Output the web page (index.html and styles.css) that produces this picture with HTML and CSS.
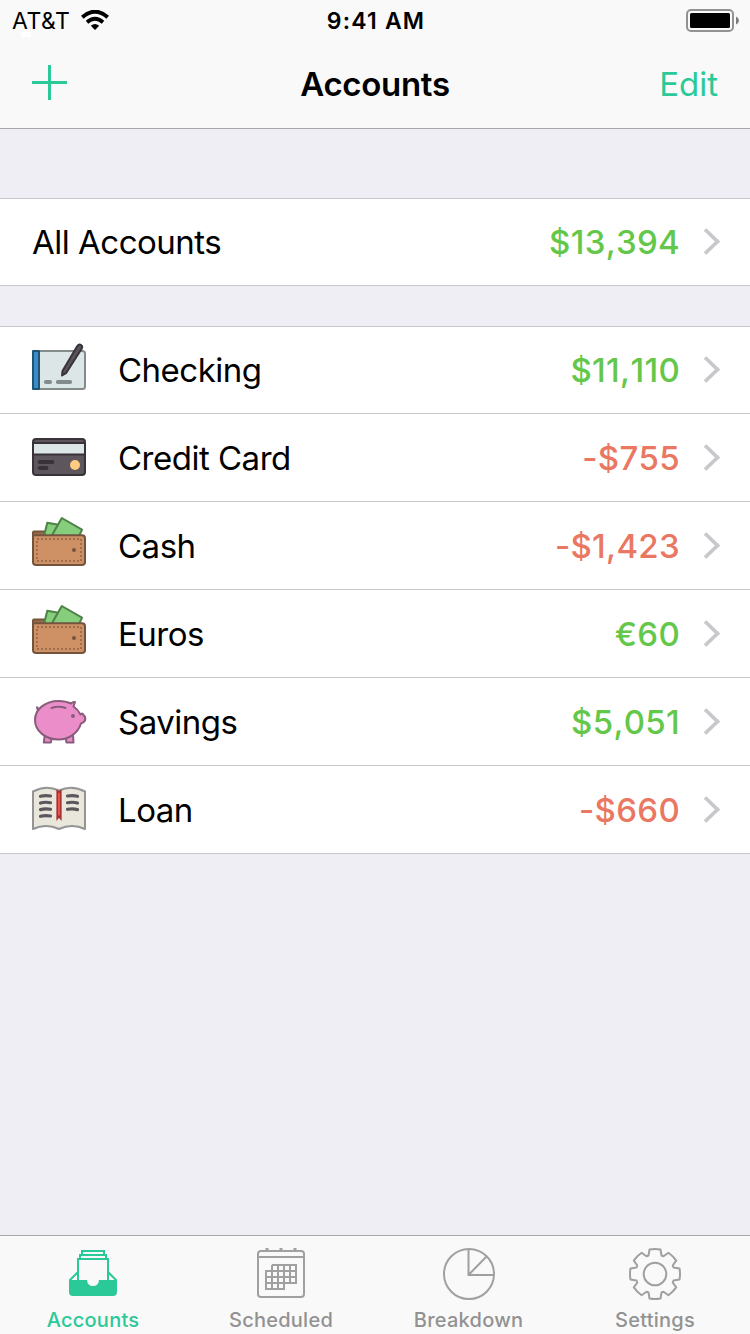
FILE: index.html
```html
<!DOCTYPE html>
<html lang="en">
<head>
    <meta charset="UTF-8">
    <title>Accounts</title>
    <link rel="stylesheet" href="styles.css">
</head>
<body>
    <!-- shared shapes -->
    <svg class="defs" width="0" height="0">
        <symbol id="chevron" viewBox="0 0 18 28">
            <path d="M2 1.5L14.5 13.5L2 25.5" fill="none" stroke="#c7c7cc" stroke-width="3.8"/>
        </symbol>
        <symbol id="wallet" viewBox="0 0 58 87">
            <path d="M3 34V30.5Q3 29.5 4 29.5H15V34Z" fill="#9c6b4a" stroke="#75543d" stroke-width="2"/>
            <path d="M14 34L17.3 20.7L30 23L28 34Z" fill="#86ce7c" stroke="#4f8149" stroke-width="2" stroke-linejoin="round"/>
            <path d="M21.5 34L31.8 16L52 27.7L49 34Z" fill="#86ce7c" stroke="#4f8149" stroke-width="2" stroke-linejoin="round"/>
            <path d="M3 33.3H52Q55 33.3 55 36.3V60Q55 63 52 63H6Q3 63 3 60Z" fill="#ce9166" stroke="#75543d" stroke-width="2"/>
            <path d="M7 37H51V59H7Z" fill="none" stroke="#a06e4c" stroke-width="1.9" stroke-dasharray="2 2"/>
            <circle cx="44" cy="48" r="2" fill="#75543d"/>
        </symbol>
    </svg>

    <div class="screen">
        <header class="header">
            <div class="status-bar">
                <div class="carrier">
                    <span>AT&amp;T</span>
                    <svg width="28" height="20" viewBox="0 0 28 20">
                        <path d="M1.3 7.2Q14-3.8 26.7 7.2" fill="none" stroke="#000" stroke-width="4"/>
                        <path d="M6 12.2Q14 5.4 22 12.2" fill="none" stroke="#000" stroke-width="3.8"/>
                        <path d="M9.8 15.8Q14 12.2 18.2 15.800L14 20Z"/>
                    </svg>
                </div>
                <div class="time">9:41 AM</div>
                <svg class="battery" width="54" height="24" viewBox="0 0 54 24">
                    <rect x="1" y="1" width="46" height="21" rx="4" fill="none" stroke="#929292" stroke-width="2"/>
                    <rect x="4" y="4" width="40" height="15" rx="1.5"/>
                    <path d="M50 7.5Q53 9 53 11.5T50 15.5Z" fill="#7c7c7c"/>
                </svg>
            </div>
            <nav class="nav-bar">
                <svg class="add" width="35" height="35" viewBox="0 0 35 35">
                    <path d="M16 0H19V16H35V19H19V35H16V19H0V16H16Z" fill="#2cc998"/>
                </svg>
                <h1>Accounts</h1>
                <a class="edit">Edit</a>
            </nav>
        </header>

        <main>
            <ul class="list total">
                <li>
                    <span class="name">All Accounts</span>
                    <span class="amount">$13,394</span>
                    <svg class="chevron"><use href="#chevron"/></svg>
                </li>
            </ul>

            <ul class="list">
                <li>
                    <svg class="icon" viewBox="0 0 58 87">
                        <rect x="3" y="24" width="52" height="38" rx="2.5" fill="#dde6e7" stroke="#848b8b" stroke-width="2"/>
                        <path d="M3 24H9V62H3Z" fill="#3b8cc6" stroke="#1f5475" stroke-width="2" stroke-linejoin="round"/>
                        <path d="M15.8 55H20.2M27.8 55H40.2" stroke="#848b8b" stroke-width="3.8" stroke-linecap="round"/>
                        <path d="M32 48.5L32.500 44L47 19.5Q49 16.500 51 18T51.8 21.5L36 46.200Z" fill="#5a545a" stroke="#383338" stroke-width="2" stroke-linejoin="round"/>
                    </svg>
                    <span class="name">Checking</span>
                    <span class="amount">$11,110</span>
                    <svg class="chevron"><use href="#chevron"/></svg>
                </li>
                <li>
                    <svg class="icon" viewBox="0 0 58 87">
                        <rect x="3" y="25" width="52" height="36" rx="3" fill="#5d575d"/>
                        <path d="M3 29H55V40.5H3Z" fill="#dde6e7" stroke="#383338" stroke-width="2"/>
                        <rect x="3" y="25" width="52" height="36" rx="3" fill="none" stroke="#383338" stroke-width="2"/>
                        <path d="M9.5 48H22.5M9.5 54H16.5" stroke="#383338" stroke-width="3.8" stroke-linecap="round"/>
                        <circle cx="45" cy="51" r="5" fill="#ffcc80"/>
                    </svg>
                    <span class="name">Credit Card</span>
                    <span class="amount negative">-$755</span>
                    <svg class="chevron"><use href="#chevron"/></svg>
                </li>
                <li>
                    <svg class="icon"><use href="#wallet"/></svg>
                    <span class="name">Cash</span>
                    <span class="amount negative">-$1,423</span>
                    <svg class="chevron"><use href="#chevron"/></svg>
                </li>
                <li>
                    <svg class="icon"><use href="#wallet"/></svg>
                    <span class="name">Euros</span>
                    <span class="amount">€60</span>
                    <svg class="chevron"><use href="#chevron"/></svg>
                </li>
                <li>
                    <svg class="icon" viewBox="0 0 58 87">
                        <g fill="#ea8dc9" stroke="#885c7b" stroke-width="2" stroke-linejoin="round">
                            <path d="M7.6 28.5Q6.5 31 9.8 34" fill="none" stroke-width="2.4"/>
                            <path d="M15 56L13.8 64.5H20.8L22 59ZM43 56L43.5 64.5H36.5L35.5 59Z"/>
                            <path d="M28.5 23C36 23 39 24.5 41 25.5Q43 23.5 45 24L43.5 28.5Q48 31.5 50.5 36.5Q53 34.5 53.5 37Q56 39 55 42.5Q54 44.5 51 45.5C48 55 39 61.5 28.5 61.5C15.5 61.5 5 53 5 42S15.5 23 28.5 23Z"/>
                            <path d="M21.5 30Q28.5 27.5 35.5 30" fill="none" stroke-linecap="round"/>
                        </g>
                        <circle cx="43" cy="38" r="2" fill="#885c7b"/>
                    </svg>
                    <span class="name">Savings</span>
                    <span class="amount">$5,051</span>
                    <svg class="chevron"><use href="#chevron"/></svg>
                </li>
                <li>
                    <svg class="icon" viewBox="0 0 58 87">
                        <path d="M3 25.5Q16 18.5 29 24.5Q42 18.5 55 25.5V63Q42 57 29 63Q16 57 3 63Z" fill="#e9e7dc" stroke="#949494" stroke-width="2" stroke-linejoin="round"/>
                        <path d="M10.500 30.3Q15 29 20.500 30M10.500 37Q15 35.700 20.500 36.700M10.500 43.600Q15 42.300 20.500 43.300M10.500 50.300Q15 49 20.500 50M37.500 30Q43 29 47.500 30.300M37.500 36.700Q43 35.700 47.500 37M37.500 43.300Q43 42.300 47.500 43.600" fill="none" stroke="#5d575d" stroke-width="3.2" stroke-linecap="round"/>
                        <path d="M27.3 25L29 26L30.7 25V52.5L29 50.5L27.3 52.5Z" fill="#ff5a5a" stroke="#a52e2e" stroke-width="1.8"/>
                    </svg>
                    <span class="name">Loan</span>
                    <span class="amount negative">-$660</span>
                    <svg class="chevron"><use href="#chevron"/></svg>
                </li>
            </ul>
        </main>

        <footer class="tab-bar">
            <a class="tab active">
                <svg width="56" height="56" viewBox="0 0 56 56">
                    <path d="M4.500 34.500L13 26M51.500 34.500L43 26M13 35V13H43V35M15 13V9H41V13M17 9V5H39V9" fill="none" stroke="#2cc998" stroke-width="2"/>
                    <path d="M4 34H22Q22.5 40 28 40T34 34H52V46Q52 50 48 50H8Q4 50 4 46Z" fill="#2cc998"/>
                </svg>
                <span>Accounts</span>
            </a>
            <a class="tab">
                <svg width="56" height="56" viewBox="0 0 56 56" fill="none" stroke="#a0a0a0" stroke-width="2">
                    <rect x="5" y="5" width="46" height="46" rx="3"/>
                    <path d="M5 11H51"/>
                    <path d="M14 2V5M28 2V5M42 2V5" stroke-width="3"/>
                    <path d="M19 19H43V37H13V25H43M13 31H43M13 37V43H31V19M19 43V19M25 43V19M37 37V19"/>
                </svg>
                <span>Scheduled</span>
            </a>
            <a class="tab">
                <svg width="56" height="56" viewBox="0 0 56 56" fill="none" stroke="#a0a0a0" stroke-width="2">
                    <circle cx="28" cy="28" r="25"/>
                    <path d="M27.5 3V29H53M28 28.5L45.5 10.5"/>
                </svg>
                <span>Breakdown</span>
            </a>
            <a class="tab">
                <svg width="56" height="56" viewBox="-28 -28 56 56" fill="none" stroke="#a0a0a0" stroke-width="2" stroke-linejoin="round">
                    <circle r="11.3"/>
                    <path d="M-6.5-18.5L-5.500-24.500Q0-25.500 5.500-24.500L6.500-18.500L8.500-17.700L13.400-21.200Q18-18 21.200-13.400L17.700-8.500L18.500-6.500L24.500-5.500Q25.500 0 24.500 5.500L18.500 6.500L17.700 8.500L21.200 13.400Q18 18 13.400 21.200L8.500 17.700L6.500 18.500L5.500 24.500Q0 25.500-5.500 24.500L-6.500 18.500L-8.500 17.700L-13.400 21.200Q-18 18-21.200 13.400L-17.700 8.500L-18.500 6.500L-24.500 5.500Q-25.500 0-24.500-5.500L-18.500-6.500L-17.700-8.500L-21.200-13.400Q-18-18-13.400-21.200L-8.500-17.700Z"/>
                </svg>
                <span>Settings</span>
            </a>
        </footer>
    </div>
</body>
</html>
```
FILE: styles.css
```css
* {
    box-sizing: border-box;
}

body {
    margin: 0;
    font-family: Inter, "Liberation Sans", sans-serif;
    color: #000;
    background-color: #efeef4;
}

svg {
    display: block;
    flex-shrink: 0;
}

.defs {
    position: absolute;
}

.screen {
    display: flex;
    flex-direction: column;
    height: 1334px;
}

/* Header */
.header {
    height: 129px;
    background-color: #f9f9f9;
    border-bottom: 1px solid #a7a7ab;
}

.status-bar {
    display: grid;
    grid-template-columns: 1fr auto 1fr;
    align-items: center;
    height: 42px;
    padding: 0 10px 0 12px;
}

.carrier {
    position: relative;
    display: flex;
    align-items: center;
    gap: 11px;
    font-size: 23px;
    letter-spacing: 0.5px;
}

.carrier svg {
    margin-bottom: 2px;
}

.carrier::after {
    content: "";
    position: absolute;
    left: 9px;
    top: 25px;
    width: 10px;
    height: 5px;
    background-color: #fff;
}

.time {
    font-size: 23px;
    font-weight: 600;
    letter-spacing: 1.2px;
}

.battery {
    justify-self: end;
}

.nav-bar {
    display: grid;
    grid-template-columns: 1fr auto 1fr;
    align-items: center;
    height: 84px;
    padding: 0 32px;
}

.add {
    margin-bottom: 3px;
}

h1 {
    margin: 0;
    font-size: 33px;
    font-weight: 600;
    letter-spacing: -0.3px;
}

.edit {
    justify-self: end;
    font-size: 33px;
    color: #2cc998;
}

/* Account lists */
main {
    flex: 1;
}

.list {
    list-style: none;
    margin: 40px 0 0;
    padding: 0;
    background-color: #fff;
    border-top: 1px solid #c8c7cc;
}

.total {
    margin-top: 69px;
}

.list li {
    display: flex;
    align-items: center;
    height: 88px;
    padding: 0 29px 0 30px;
    border-bottom: 1px solid #c8c7cc;
    font-size: 33px;
}

.total li {
    height: 87px;
    padding-left: 32px;
}

.list li:first-child {
    height: 87px;
}

.icon {
    width: 58px;
    height: 87px;
    margin-right: 30px;
}

.name {
    flex: 1;
    letter-spacing: -0.5px;
}

.amount {
    margin-right: 23px;
    font-weight: 500;
    font-kerning: none;
    letter-spacing: 0.3px;
    color: #63c74a;
}

.negative {
    color: #ea7762;
}

.chevron {
    width: 18px;
    height: 28px;
}

/* Tab bar */
.tab-bar {
    display: grid;
    grid-template-columns: 186px 190px 185px 188px;
    height: 99px;
    background-color: #f9f9f9;
    border-top: 1px solid #a7a7ab;
}

.tab {
    display: flex;
    flex-direction: column;
    align-items: center;
    padding-top: 10px;
    font-size: 20px;
    font-weight: 500;
    letter-spacing: 0.25px;
    line-height: 36px;
    color: #929292;
}

.active {
    color: #2cc998;
}
```
